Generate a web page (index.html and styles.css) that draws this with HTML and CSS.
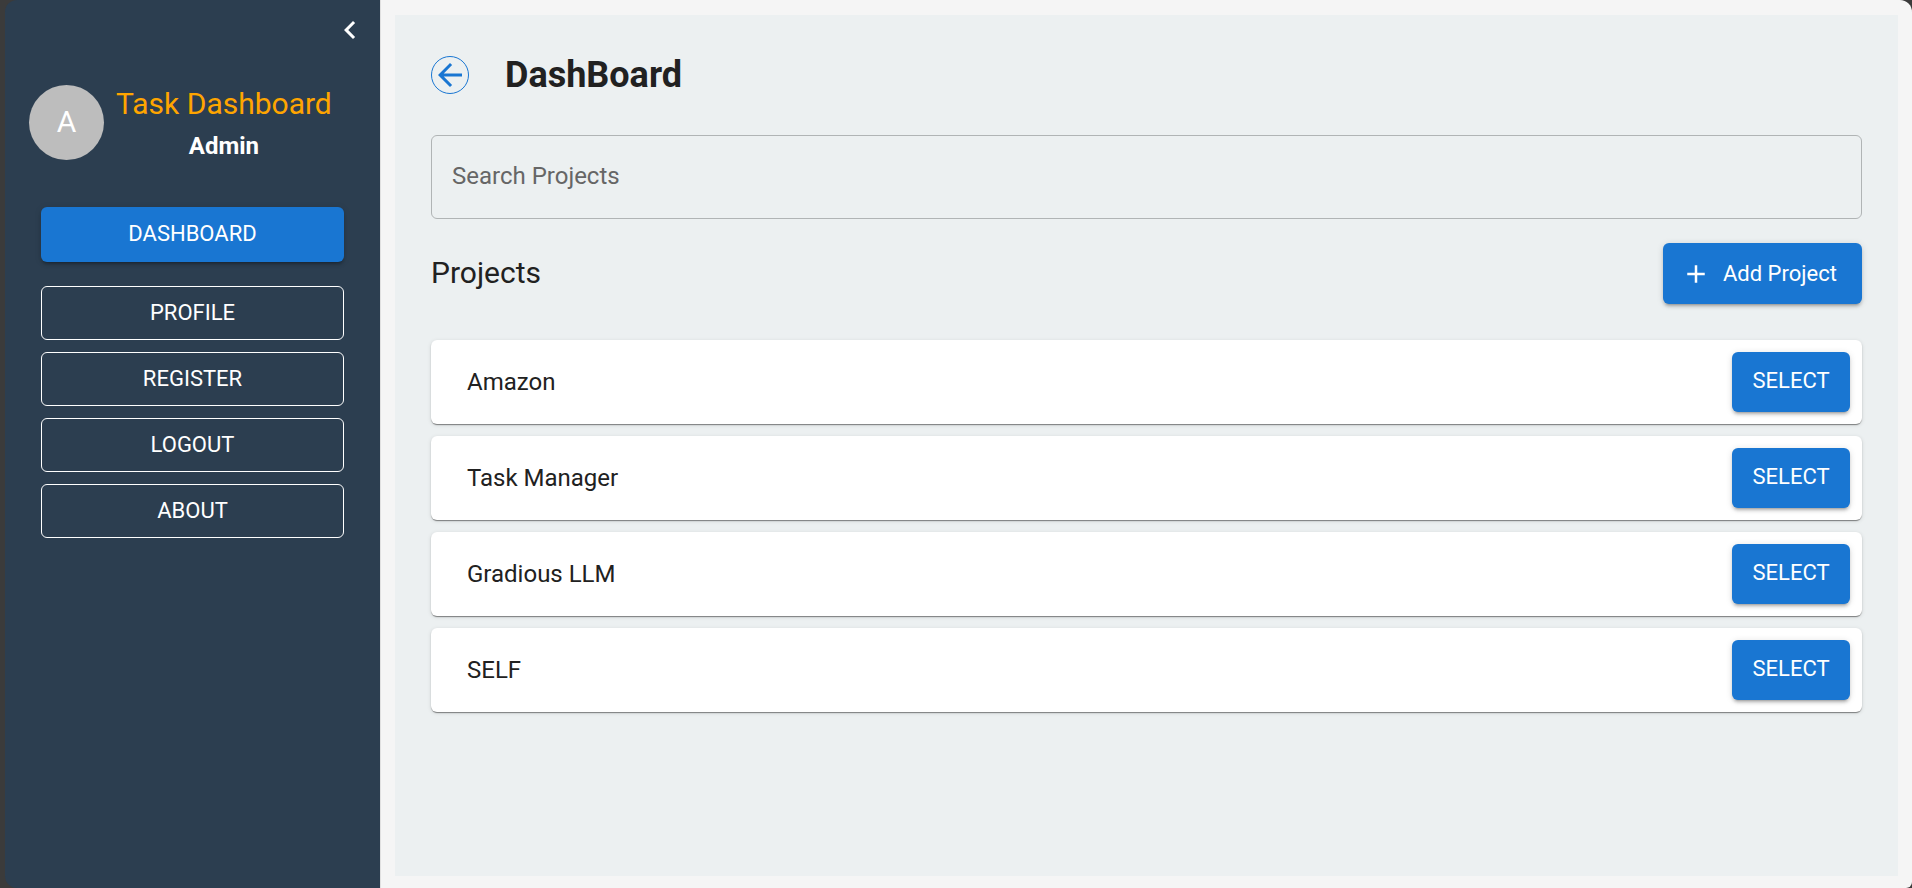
FILE: index.html
```html
<!DOCTYPE html>
<html lang="en">
<head>
<meta charset="utf-8">
<meta name="viewport" content="width=device-width, initial-scale=1">
<title>Task Dashboard</title>
<link rel="stylesheet" href="styles.css">
</head>
<body>
<div class="app">
  <aside class="sidebar">
    <div class="sidebar-top">
      <button class="icon-button" type="button" aria-label="Collapse sidebar">
        <svg class="icon" viewBox="0 0 24 24" aria-hidden="true"><path d="M15.41 7.41 14 6l-6 6 6 6 1.41-1.41L10.83 12z"/></svg>
      </button>
    </div>
    <div class="profile">
      <div class="avatar">A</div>
      <div class="profile-text">
        <div class="brand">Task Dashboard</div>
        <div class="role">Admin</div>
      </div>
    </div>
    <nav class="menu">
      <button class="menu-button menu-button-active" type="button">DASHBOARD</button>
      <button class="menu-button" type="button">PROFILE</button>
      <button class="menu-button" type="button">REGISTER</button>
      <button class="menu-button" type="button">LOGOUT</button>
      <button class="menu-button" type="button">ABOUT</button>
    </nav>
  </aside>
  <main class="main">
    <div class="panel">
      <header class="page-header">
        <button class="back-button" type="button" aria-label="Back">
          <svg class="icon" viewBox="0 0 24 24" aria-hidden="true"><path d="M20 11H7.83l5.59-5.59L12 4l-8 8 8 8 1.41-1.41L7.83 13H20z"/></svg>
        </button>
        <h1 class="page-title">DashBoard</h1>
      </header>
      <input class="search" type="text" placeholder="Search Projects" aria-label="Search Projects">
      <div class="section-header">
        <h2 class="section-title">Projects</h2>
        <button class="button add-button" type="button">
          <svg class="add-icon" viewBox="0 0 24 24" aria-hidden="true"><path d="M19 13h-6v6h-2v-6H5v-2h6V5h2v6h6z"/></svg>
          Add Project
        </button>
      </div>
      <ul class="projects">
        <li class="project"><span>Amazon</span><button class="button select-button" type="button">SELECT</button></li>
        <li class="project"><span>Task Manager</span><button class="button select-button" type="button">SELECT</button></li>
        <li class="project"><span>Gradious LLM</span><button class="button select-button" type="button">SELECT</button></li>
        <li class="project"><span>SELF</span><button class="button select-button" type="button">SELECT</button></li>
      </ul>
    </div>
  </main>
</div>
</body>
</html>
```
FILE: styles.css
```css
* {
  box-sizing: border-box;
}

body {
  margin: 0;
  padding-left: 5px;
  background: #3b3b3b;
  color: #212121;
  font-family: Roboto, "Liberation Sans", sans-serif;
  font-size: 24px;
  line-height: 36px;
}

button,
input {
  font-family: inherit;
}

button {
  cursor: pointer;
}

.app {
  display: flex;
  min-height: 100vh;
  border-radius: 12px 12px 6px 12px;
  overflow: hidden;
}

.sidebar {
  flex: none;
  width: 376px;
  border-right: 1px solid #e0e0e0;
  background: #2c3e50;
  color: #fff;
}

.sidebar-top {
  display: flex;
  justify-content: flex-end;
  padding: 12px;
}

.icon-button {
  padding: 0;
  border: 0;
  background: none;
  color: #fff;
}

.icon {
  display: block;
  width: 36px;
  height: 36px;
  fill: currentColor;
}

.profile {
  display: flex;
  align-items: center;
  gap: 12px;
  padding: 20px 24px;
}

.avatar {
  display: flex;
  flex: none;
  align-items: center;
  justify-content: center;
  width: 75px;
  height: 75px;
  border-radius: 50%;
  background: #bdbdbd;
  font-size: 30px;
}

.profile-text {
  text-align: center;
}

.brand {
  color: #ffa500;
  font-size: 30px;
  line-height: 48px;
}

.role {
  font-weight: 700;
}

.menu {
  display: flex;
  flex-direction: column;
  gap: 12px;
  padding: 23px 36px;
}

.menu-button {
  height: 54px;
  padding: 0 22px 2px;
  border: 1px solid #fff;
  border-radius: 6px;
  background: none;
  color: #fff;
  font-size: 22px;
}

.menu-button-active {
  height: 55px;
  margin-bottom: 12px;
  border: 0;
  background: #1976d2;
  box-shadow: 0 4px 2px -3px rgba(0, 0, 0, .2), 0 3px 3px rgba(0, 0, 0, .14), 0 1px 7px rgba(0, 0, 0, .12);
}

.main {
  display: flex;
  flex: 1;
  padding: 15px 14px 12px;
  background: #f5f5f5;
}

.panel {
  flex: 1;
  padding: 36px;
  background: #ecf0f1;
}

.page-header {
  display: flex;
  align-items: center;
  gap: 36px;
  margin-bottom: 36px;
}

.back-button {
  padding: 0;
  border: 1px solid #1976d2;
  border-radius: 50%;
  background: none;
  color: #1976d2;
}

.page-title {
  margin: 0;
  font-size: 36px;
  line-height: 48px;
}

.search {
  display: block;
  width: 100%;
  height: 84px;
  padding: 0 20px 2px;
  border: 1px solid #b0b4b5;
  border-radius: 6px;
  background: none;
  color: #212121;
  font-size: 24px;
}

.search::placeholder {
  color: #666;
  opacity: 1;
}

.section-header {
  display: flex;
  align-items: center;
  justify-content: space-between;
  margin: 24px 0 36px;
}

.section-title {
  margin: 0;
  padding-bottom: 2px;
  font-size: 30px;
  font-weight: 400;
}

.button {
  border: 0;
  border-radius: 6px;
  background: #1976d2;
  box-shadow: 0 4px 2px -3px rgba(0, 0, 0, .2), 0 3px 3px rgba(0, 0, 0, .14), 0 1px 7px rgba(0, 0, 0, .12);
  color: #fff;
  font-size: 22px;
}

.add-button {
  display: flex;
  align-items: center;
  gap: 12px;
  min-width: 199px;
  height: 61px;
  padding: 0 24px 0 18px;
}

.add-icon {
  width: 30px;
  height: 30px;
  fill: currentColor;
}

.projects {
  display: grid;
  gap: 12px;
  margin: 0;
  padding: 0;
  list-style: none;
}

.project {
  display: flex;
  align-items: center;
  justify-content: space-between;
  padding: 12px 12px 12px 36px;
  border-radius: 6px;
  background: #fff;
  box-shadow: 0 3px 1px -2px rgba(0, 0, 0, .2), 0 1px 1px rgba(0, 0, 0, .28), 0 1px 4px rgba(0, 0, 0, .12);
}

.select-button {
  width: 118px;
  height: 60px;
  padding: 0 0 3px;
}
```
